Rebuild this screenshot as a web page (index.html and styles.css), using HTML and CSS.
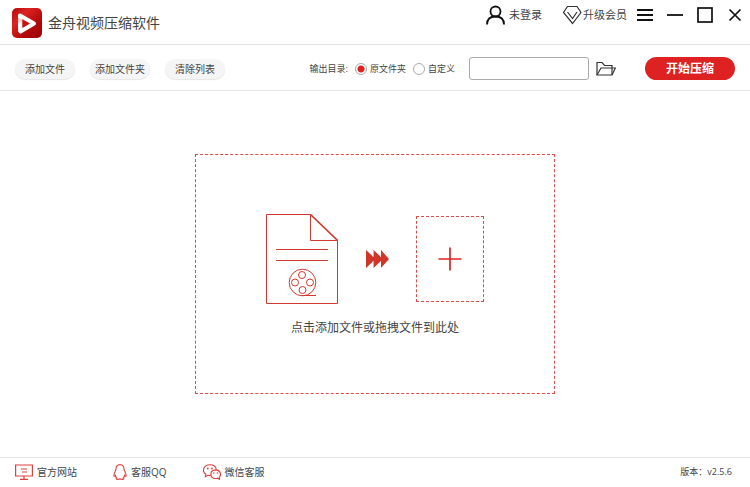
FILE: index.html
```html
<!DOCTYPE html>
<html lang="zh-CN">
<head>
    <meta charset="UTF-8">
    <meta name="viewport" content="width=device-width, initial-scale=1.0">
    <title>金舟视频压缩软件</title>
    <link rel="stylesheet" href="styles.css">
</head>
<body>
    <header class="titlebar">
        <div class="brand">
            <svg class="logo" width="30" height="30" viewBox="0 0 30 30" aria-hidden="true">
                <defs>
                    <linearGradient id="logoRed" x1="0" y1="0" x2="1" y2="1">
                        <stop offset="0" stop-color="#b5090b"/>
                        <stop offset="0.3" stop-color="#d92422"/>
                        <stop offset="0.65" stop-color="#b3090b"/>
                        <stop offset="1" stop-color="#9a0306"/>
                    </linearGradient>
                    <linearGradient id="logoFold" x1="0" y1="0" x2="0" y2="1">
                        <stop offset="0" stop-color="#f0b4b0"/>
                        <stop offset="0.5" stop-color="#ffffff"/>
                    </linearGradient>
                </defs>
                <rect width="30" height="30" rx="5" fill="url(#logoRed)"/>
                <path d="M8 7.500L22 15.500L8.500 23.500Z" fill="none" stroke="#fff" stroke-width="4" stroke-linejoin="round"/>
                <path d="M6 10L10 12V21L6.200 24Z" fill="url(#logoFold)"/>
                <path d="M11 12L17 15.500L11 19Z" fill="#c41516"/>
            </svg>
            <h1>金舟视频压缩软件</h1>
        </div>
        <div class="window-tools">
            <button class="link-button login" type="button">
                <svg width="20" height="20" viewBox="0 0 20 20" fill="none" stroke="#111" stroke-width="1.800" aria-hidden="true">
                    <circle cx="10.500" cy="6.500" r="5"/>
                    <path d="M2 19.500C2 14 5.500 11.500 10.500 11.500S19 14 19 19.500"/>
                </svg>
                未登录
            </button>
            <button class="link-button vip" type="button">
                <svg width="20" height="20" viewBox="0 0 20 20" fill="none" stroke="#333" stroke-width="1.200" aria-hidden="true">
                    <path d="M5.500 1.500H15L19 7.500L10.500 18.500L1.500 7.500Z"/>
                    <path d="M5.500 7L10.500 13.500L15 7"/>
                </svg>
                升级会员
            </button>
            <div class="window-buttons">
                <button type="button" aria-label="菜单">
                    <svg width="16" height="16" viewBox="0 0 16 16" stroke="#111" stroke-width="1.800"><path d="M0 3H16M0 8H16M0 13H16"/></svg>
                </button>
                <button type="button" aria-label="最小化">
                    <svg width="16" height="16" viewBox="0 0 16 16" stroke="#111" stroke-width="1.800"><path d="M0 8H16"/></svg>
                </button>
                <button type="button" aria-label="最大化">
                    <svg width="16" height="16" viewBox="0 0 16 16" fill="none" stroke="#111" stroke-width="1.700"><rect x="1" y="1" width="14" height="14"/></svg>
                </button>
                <button type="button" aria-label="关闭">
                    <svg width="16" height="16" viewBox="0 0 16 16" stroke="#111" stroke-width="1.700"><path d="M2.500 2.500L13.500 13.500M13.500 2.500L2.500 13.500"/></svg>
                </button>
            </div>
        </div>
    </header>

    <div class="toolbar">
        <div class="file-actions">
            <button type="button">添加文件</button>
            <button type="button">添加文件夹</button>
            <button type="button">清除列表</button>
        </div>
        <div class="output" role="radiogroup" aria-labelledby="outputLabel">
            <span id="outputLabel">输出目录:</span>
            <label><input type="radio" name="output" value="source" checked>原文件夹</label>
            <label><input type="radio" name="output" value="custom">自定义</label>
        </div>
        <input class="path" type="text" aria-label="输出路径">
        <button class="browse" type="button" aria-label="选择文件夹">
            <svg width="20" height="16" viewBox="0 0 20 16" fill="none" stroke="#333" stroke-width="1.200">
                <path d="M1 14V1.500H6L8.500 4.500H16V7"/>
                <path d="M1 14L5 7H19.300L16 14Z"/>
                <path d="M16 7V14"/>
            </svg>
        </button>
        <button class="start" type="button">开始压缩</button>
    </div>

    <main class="workspace">
        <button class="drop-zone" type="button">
            <span class="drop-picture">
                <svg width="72" height="90" viewBox="0 0 72 90" fill="none" stroke="#d0392f" aria-hidden="true">
                    <path d="M44.500 0.500H0.500V89.500H71.500V26.500"/>
                    <path d="M44.500 0.500V26.500H71.500"/>
                    <path d="M44.500 0.500L71.500 26.500" stroke-width="1.600"/>
                    <path d="M10 35.500H62M10 46.500H62"/>
                    <circle cx="36.500" cy="68.500" r="13.300"/>
                    <circle cx="36" cy="61" r="3.500"/>
                    <circle cx="29" cy="68.500" r="3.500"/>
                    <circle cx="44" cy="68.500" r="3.500"/>
                    <circle cx="36.500" cy="76" r="3.500"/>
                    <path d="M36 81.500H50"/>
                </svg>
                <svg width="24" height="18" viewBox="0 0 24 18" fill="#cf3528" aria-hidden="true">
                    <path d="M1 0L8.500 7V0L16 7V0L24 9L16 18V11L8.500 18V11L1 18Z"/>
                    <path d="M8 1V7M8 11V17M15.500 1V7M15.500 11V17" stroke="#fff" stroke-opacity="0.5" stroke-width="0.700"/>
                </svg>
                <span class="plus-box">
                    <svg width="24" height="24" viewBox="0 0 24 24" stroke="#de2221" stroke-width="1.700" aria-hidden="true"><path d="M12 0.500V23.500M0.500 12H23.500"/></svg>
                </span>
            </span>
            <span class="drop-hint">点击添加文件或拖拽文件到此处</span>
        </button>
    </main>

    <footer class="statusbar">
        <a href="#">
            <svg width="18" height="16" viewBox="0 0 18 16" fill="none" stroke="#e0403d" stroke-width="1.200" aria-hidden="true">
                <path d="M0.600 1H17.400V12H0.600ZM9 12V15M5 15.400H13M6 5H12M7 8H12"/>
            </svg>
            官方网站
        </a>
        <a href="#">
            <svg width="14" height="16" viewBox="0 0 14 16" fill="none" stroke="#e0403d" stroke-width="1.100" aria-hidden="true">
                <path d="M7 0.600C4.300 0.600 2.900 2.700 3 5C3 6.500 1 8.500 0.900 11.500C0.900 12.500 1.700 12.300 2.400 11.400C2.500 12.500 3 13.300 3.700 14C2.400 15 3.500 15.400 5 15.400C6 15.400 6.500 15.100 7 14.700C7.500 15.100 8 15.400 9 15.400C10.500 15.400 11.600 15 10.300 14C11 13.300 11.500 12.500 11.600 11.400C12.300 12.300 13.100 12.500 13.100 11.500C13 8.500 11 6.500 11 5C11.100 2.700 9.700 0.600 7 0.600Z"/>
            </svg>
            客服QQ
        </a>
        <a href="#">
            <svg width="18" height="16" viewBox="0 0 18 16" fill="none" stroke="#e0403d" stroke-width="1.100" aria-hidden="true">
                <path d="M8 11.500C7 11.700 5.800 11.600 4.900 11.300L2.300 12.700L2.800 10.300C-1.500 7 0.600 0.700 7 0.700C10.700 0.700 13 3 13.300 5.700"/>
                <path d="M12.600 5.900C6.300 6.200 6.300 14.200 12.600 14.500C13.300 14.500 14 14.400 14.500 14.200L16.500 15.300L16.200 13.300C19 11 17.300 6 12.600 5.900Z"/>
                <g fill="#e0403d" stroke="none">
                    <circle cx="4.800" cy="4.500" r="0.900"/>
                    <circle cx="9" cy="4.500" r="0.900"/>
                    <circle cx="10.800" cy="9" r="0.800"/>
                    <circle cx="14.400" cy="9" r="0.800"/>
                </g>
            </svg>
            微信客服
        </a>
        <span class="version">版本：v2.5.6</span>
    </footer>
</body>
</html>
```

FILE: styles.css
```css
* {
    box-sizing: border-box;
}

body {
    margin: 0;
    min-height: 100vh;
    display: flex;
    flex-direction: column;
    background-color: #fff;
    color: #444;
    font-family: "Open Sans", "Noto Sans CJK SC", sans-serif;
    font-size: 10px;
    line-height: 16px;
}

button,
input {
    font: inherit;
    color: inherit;
}

button {
    padding: 0;
    border: none;
    background: none;
    cursor: pointer;
}

svg {
    display: block;
    flex: none;
}

/* title bar */
.titlebar {
    display: flex;
    justify-content: space-between;
    padding: 0 7px 0 12px;
    border-bottom: 1px solid #e3e3e3;
}

.brand {
    display: flex;
    align-items: center;
    gap: 6px;
    padding: 8px 0 6px;
}

.brand h1 {
    margin: 0;
    font-size: 14px;
    font-weight: normal;
    line-height: 20px;
}

.window-tools {
    display: flex;
    align-items: center;
    align-self: flex-start;
    height: 30px;
}

.link-button {
    display: flex;
    align-items: center;
    gap: 4px;
    font-size: 11px;
}

.vip {
    margin-left: 20px;
    gap: 1px;
}

.window-buttons {
    display: flex;
    gap: 14px;
    margin-left: 10px;
}

/* toolbar */
.toolbar {
    display: flex;
    align-items: center;
    padding: 12px 15px 10px;
    border-bottom: 1px solid #e3e3e3;
}

.file-actions {
    display: flex;
    gap: 15px;
    margin-right: auto;
}

.file-actions button {
    width: 60px;
    height: 20px;
    border-radius: 10px;
    background-color: #f5f5f5;
    box-shadow: 0 1px 1px #e6e6e6;
}

.output {
    display: flex;
    align-items: center;
    gap: 7px;
    font-size: 9px;
}

.output label {
    display: flex;
    align-items: center;
    gap: 3px;
}

.output input {
    appearance: none;
    width: 12px;
    height: 12px;
    margin: 0;
    border: 1px solid #aaa;
    border-radius: 50%;
}

.output input:checked {
    background: radial-gradient(circle, #de2221 3px, #fff 4px);
}

.path {
    width: 120px;
    height: 23px;
    margin-left: 14px;
    padding: 0 6px;
    border: 1px solid #aaa;
    border-radius: 3px;
}

.browse {
    margin-left: 7px;
}

.start {
    width: 90px;
    height: 23px;
    margin-left: 29px;
    border-radius: 12px;
    background-color: #de2221;
    color: #fff;
    font-size: 12px;
    font-weight: bold;
}

/* drop area */
.workspace {
    flex: 1;
    display: flex;
    align-items: center;
    justify-content: center;
}

.drop-zone {
    display: flex;
    flex-direction: column;
    align-items: center;
    gap: 15px;
    padding: 59px 70px 56px;
    border: 1px dashed #e04a48;
}

.drop-picture {
    display: flex;
    align-items: center;
    gap: 27px;
}

.plus-box {
    display: flex;
    align-items: center;
    justify-content: center;
    width: 68px;
    height: 86px;
    border: 1px dashed #e04a48;
}

.drop-hint {
    font-size: 12px;
    line-height: 18px;
}

/* status bar */
.statusbar {
    display: flex;
    align-items: center;
    gap: 36px;
    padding: 6px 18px 7px 15px;
    border-top: 1px solid #e3e3e3;
}

.statusbar a {
    display: flex;
    align-items: center;
    gap: 4px;
    color: inherit;
    text-decoration: none;
}

.version {
    margin-left: auto;
    font-size: 9px;
}
```
